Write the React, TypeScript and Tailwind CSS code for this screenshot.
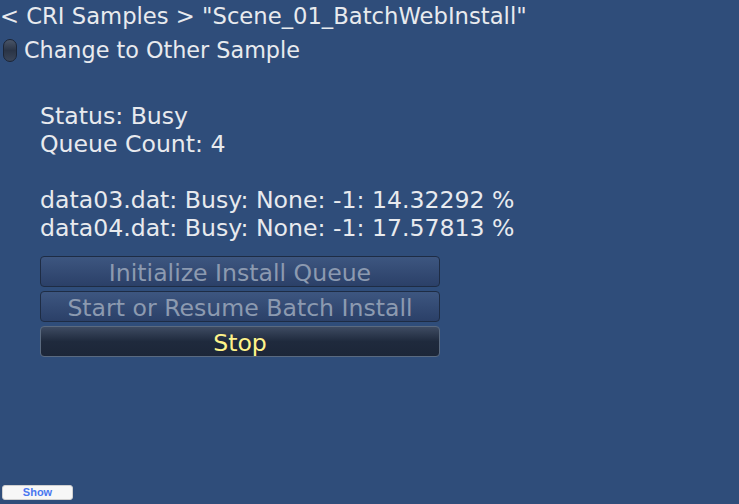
export default function App() {
  const font = { fontFamily: '"DejaVu Sans", "Noto Sans", sans-serif' };
  return (
    <div
      className="relative w-[739px] h-[504px] bg-[#2f4d7a] text-[#e8eaee] text-[23.6px] leading-[28px] overflow-hidden"
      style={font}
    >
      <div className="pt-[2px] h-[36px] text-[22.7px]">&lt; CRI Samples &gt; "Scene_01_BatchWebInstall"</div>
      <div className="flex items-center h-[28px] text-[22.3px]">
        <div className="ml-[3px] w-[14px] h-[23px] rounded-[7px] border border-[#1c2536] bg-gradient-to-b from-[#4a5568] via-[#2a3446] to-[#3a4558]" />
        <span className="ml-[7px]">Change to Other Sample</span>
      </div>
      <div className="pl-[40px] pt-[38px]">
        <div>Status: Busy</div>
        <div>Queue Count: 4</div>
        <div className="h-[28px]" />
        <div>data03.dat: Busy: None: -1: 14.32292 %</div>
        <div>data04.dat: Busy: None: -1: 17.57813 %</div>
        <div className="flex flex-col gap-[4px] mt-[14px] w-[400px]">
          <button className="h-[31px] pt-[3px] rounded-[4px] border border-[#1e2c44] bg-gradient-to-b from-[#3d5680] to-[#2b4068] text-[#8c9ab0] text-[23.6px] leading-[26px]" style={font}>
            Initialize Install Queue
          </button>
          <button className="h-[31px] pt-[3px] rounded-[4px] border border-[#1e2c44] bg-gradient-to-b from-[#3d5680] to-[#2b4068] text-[#8c9ab0] text-[23.6px] leading-[26px]" style={font}>
            Start or Resume Batch Install
          </button>
          <button className="h-[31px] pt-[3px] rounded-[4px] border border-[#5a6a80] bg-gradient-to-b from-[#3e4b62] via-[#1f2a3d] to-[#1c2638] text-[#fff38a] text-[23.6px] leading-[26px]" style={font}>
            Stop
          </button>
        </div>
      </div>
      <div className="absolute left-[2px] top-[485px] w-[71px] h-[15px] rounded-[3px] bg-[#f7f7f7] border border-[#d0d0d0] flex items-center justify-center text-[11px] leading-none font-bold text-[#4a78f0]" style={{ fontFamily: '"Liberation Sans", Arial, sans-serif' }}>
        Show
      </div>
    </div>
  );
}
